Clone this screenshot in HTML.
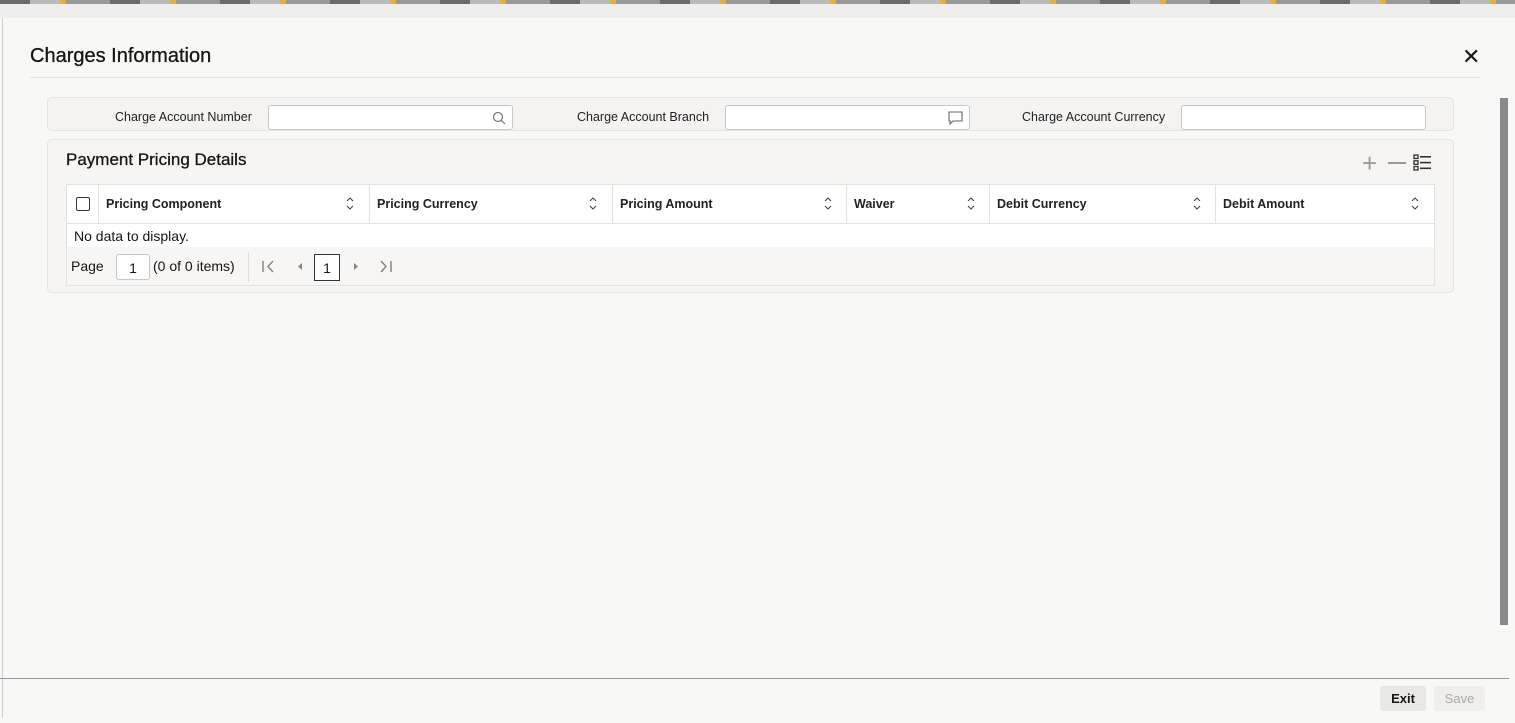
<!DOCTYPE html>
<html><head><style>
*{box-sizing:border-box;margin:0;padding:0}
body{width:1515px;height:723px;position:relative;overflow:hidden;background:#f8f8f7;font-family:"Liberation Sans",sans-serif;color:#161513}
.a{position:absolute}
.lbl{font-size:12.5px;position:absolute;top:110px;color:#222}
.inp{position:absolute;top:105px;height:25px;border:1px solid #c9c7c4;border-radius:3px;background:#fff}
.th{position:absolute;top:185px;height:38px;font-size:12.5px;font-weight:bold;line-height:38px;padding-left:7px;border-right:1px solid #e4e2df;background:#fff;color:#222}
</style></head><body>
<div class="a" style="left:0;top:0;width:1515px;height:4px;background:repeating-linear-gradient(90deg,#6b6b6b 0 30px,#bbb 30px 60px,#e0b040 60px 66px,#999 66px 110px)"></div>
<div class="a" style="left:0;top:4px;width:1515px;height:14px;background:#efeeed"></div>
<div class="a" style="left:2px;top:18px;width:1px;height:700px;background:#ccc"></div>
<div class="a" style="left:30px;top:45px;font-size:20px;-webkit-text-stroke:0.3px #161513">Charges Information</div>
<div class="a" style="left:1462px;top:44px;font-size:22px">✕</div>
<div class="a" style="left:30px;top:77px;width:1450px;height:1px;background:#e6e4e1"></div>
<div class="a" style="left:47px;top:97px;width:1407px;height:34px;background:#f5f3f1;border:1px solid #e6e4e1;border-radius:5px"></div>
<div class="lbl" style="left:115px">Charge Account Number</div>
<div class="inp" style="left:268px;width:245px"><svg class="a" style="right:6px;top:5px" width="14" height="14" viewBox="0 0 14 14"><circle cx="6" cy="6" r="4.5" fill="none" stroke="#777" stroke-width="1.2"/><path d="M9.3 9.3L13 13" stroke="#777" stroke-width="1.2"/></svg></div>
<div class="lbl" style="left:577px">Charge Account Branch</div>
<div class="inp" style="left:725px;width:245px"><svg class="a" style="right:6px;top:5px" width="15" height="14" viewBox="0 0 15 14"><path d="M1 1h13v9H5l-3 3V10H1z" fill="none" stroke="#666" stroke-width="1.1"/></svg></div>
<div class="lbl" style="left:1022px">Charge Account Currency</div>
<div class="inp" style="left:1181px;width:245px"></div>
<div class="a" style="left:47px;top:139px;width:1407px;height:154px;background:#f7f5f3;border:1px solid #e6e4e1;border-radius:5px"></div>
<div class="a" style="left:66px;top:150px;font-size:17px;-webkit-text-stroke:0.3px #161513">Payment Pricing Details</div>
<div class="a" style="left:1362px;top:148px;font-size:26px;color:#999;font-weight:300">+</div>
<div class="a" style="left:1388px;top:162px;width:18px;height:1.5px;background:#999"></div>
<svg class="a" style="left:1413px;top:154px" width="19" height="17" viewBox="0 0 19 17"><g fill="none" stroke="#333" stroke-width="1.3"><rect x="1" y="1" width="4" height="3.5"/><rect x="1" y="6.8" width="4" height="3.5"/><rect x="1" y="12.5" width="4" height="3.5"/></g><g fill="#333"><rect x="7" y="2" width="11" height="1.6"/><rect x="7" y="7.8" width="11" height="1.6"/><rect x="7" y="13.5" width="11" height="1.6"/></g></svg>
<div class="a" style="left:66px;top:184px;width:1369px;height:102px;border:1px solid #e4e2df;background:#fff"></div>
<div class="th" style="left:67px;width:32px;background:#fff"><div class="a" style="left:9px;top:12px;width:14px;height:14px;border:1.5px solid #333;border-radius:2px"></div></div>
<div class="th" style="left:99px;width:271px">Pricing Component</div>
<div class="th" style="left:370px;width:243px">Pricing Currency</div>
<div class="th" style="left:613px;width:234px">Pricing Amount</div>
<div class="th" style="left:847px;width:143px">Waiver</div>
<div class="th" style="left:990px;width:226px">Debit Currency</div>
<div class="th" style="left:1216px;width:218px;border-right:none">Debit Amount</div>
<svg class="a" style="left:0;top:0" width="1515" height="723"><g fill="none" stroke="#444" stroke-width="1.1">
<path d="M347 201l3-3 3 3M347 206l3 3 3-3"/><path d="M590 201l3-3 3 3M590 206l3 3 3-3"/><path d="M825 201l3-3 3 3M825 206l3 3 3-3"/><path d="M968 201l3-3 3 3M968 206l3 3 3-3"/><path d="M1194 201l3-3 3 3M1194 206l3 3 3-3"/><path d="M1412 201l3-3 3 3M1412 206l3 3 3-3"/></g></svg>
<div class="a" style="left:67px;top:223px;width:1367px;height:1px;background:#e4e2df"></div>
<div class="a" style="left:74px;top:228px;font-size:14px">No data to display.</div>
<div class="a" style="left:67px;top:247px;width:1367px;height:38px;background:#f7f6f5"></div>
<div class="a" style="left:71px;top:258px;font-size:14px">Page</div>
<div class="a" style="left:116px;top:254px;width:34px;height:26px;border:1px solid #c9c7c4;border-radius:3px;background:#fff;font-size:14px;text-align:center;line-height:26px">1</div>
<div class="a" style="left:153px;top:258px;font-size:14px">(0 of 0 items)</div>
<div class="a" style="left:248px;top:252px;width:1px;height:30px;background:#ddd"></div>
<svg class="a" style="left:260px;top:258px" width="140" height="18" viewBox="0 0 140 18"><g fill="none" stroke="#777" stroke-width="1.3"><path d="M3 3v11M13 3l-5 5.5 5 5.5"/><path d="M121 3l5 5.5-5 5.5M131 3v11"/></g><path d="M42 5v7l-4-3.5z" fill="#888"/><path d="M94 5v7l4-3.5z" fill="#888"/></svg>
<div class="a" style="left:314px;top:254px;width:26px;height:27px;border:1px solid #333;font-size:14px;text-align:center;line-height:27px;background:#fff">1</div>
<div class="a" style="left:1500px;top:98px;width:8px;height:527px;background:#8a8a8a"></div>
<div class="a" style="left:0;top:678px;width:1509px;height:1px;background:#999"></div>
<div class="a" style="left:1380px;top:686px;width:46px;height:25px;background:#e9e8e6;border-radius:3px;font-size:13px;font-weight:bold;text-align:center;line-height:25px">Exit</div>
<div class="a" style="left:1434px;top:686px;width:51px;height:25px;background:#f0efed;border-radius:3px;font-size:13px;color:#aaa;text-align:center;line-height:25px">Save</div>
</body></html>
